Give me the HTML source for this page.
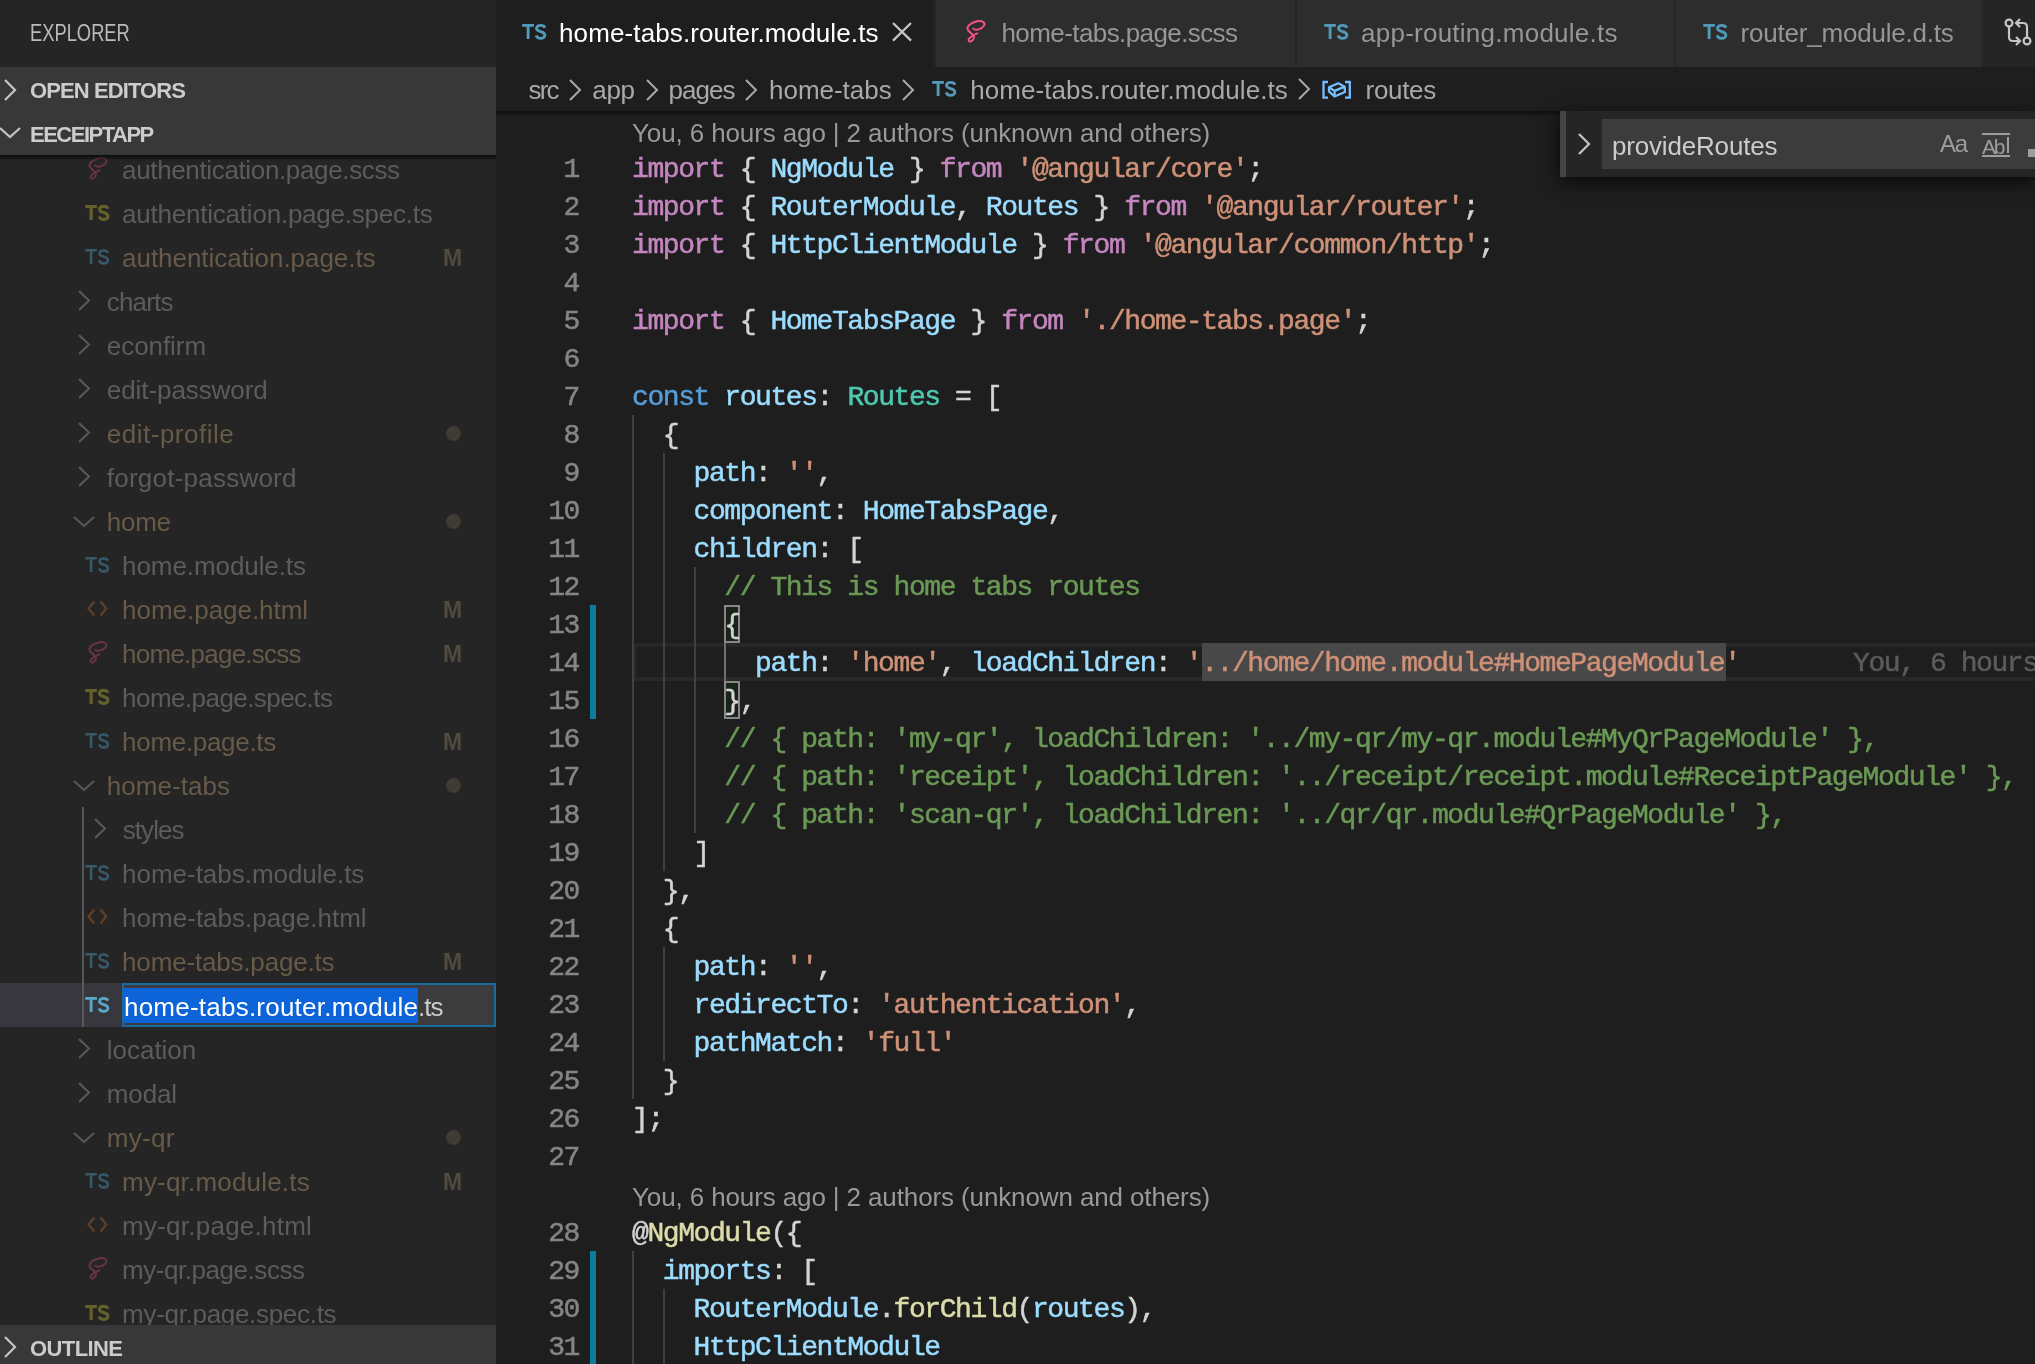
<!DOCTYPE html>
<html><head><meta charset="utf-8"><style>
html,body{margin:0;padding:0;width:2035px;height:1364px;overflow:hidden;background:#1e1e1e;font-family:'Liberation Sans', sans-serif}
#root{position:absolute;left:0;top:0;width:2035px;height:1364px;will-change:transform;overflow:hidden}
#root div, #root svg{position:absolute}
.c{-webkit-text-stroke:0.5px currentColor}
</style></head><body><div id="root"><div style="left:0px;top:0px;width:496px;height:1364px;background:#252526;"></div><div style="left:30px;top:11px;font-size:23.5px;line-height:44px;color:#bbbbbb;font-family:'Liberation Sans', sans-serif;white-space:pre;transform-origin:0 0;transform:scaleX(0.78);">EXPLORER</div><div style="left:0px;top:67px;width:496px;height:88px;background:#383838;"></div><svg style="left:3px;top:78px" width="16" height="24"><path d="M2 2 L12 12.0 L2 22" fill="none" stroke="#c5c5c5" stroke-width="2.2"/></svg><div style="left:30px;top:69px;font-size:22px;line-height:44px;color:#cccccc;font-weight:bold;font-family:'Liberation Sans', sans-serif;white-space:pre;letter-spacing:-0.9px;">OPEN EDITORS</div><svg style="left:-2px;top:126px" width="24" height="15"><path d="M2 2 L12.0 11 L22 2" fill="none" stroke="#c5c5c5" stroke-width="2.2"/></svg><div style="left:30px;top:113px;font-size:22px;line-height:44px;color:#cccccc;font-weight:bold;font-family:'Liberation Sans', sans-serif;white-space:pre;letter-spacing:-1.5px;">EECEIPTAPP</div><div style="left:0;top:155px;width:496px;height:1170px;overflow:hidden"><svg style="left:82px;top:-3px" width="32" height="32" viewBox="0 0 32 32"><path d="M13.2 13.6 C15.5 15.8 21.5 14.5 24 10.8 C25.8 7.5 22 5.2 17 6.3 C12 7.4 7 10.8 7.5 14 C8 16.5 12 18.5 13.8 20.5 C14.5 22.5 13.5 25.3 11 26.3 C8.7 27.2 7.8 25 9.2 23.5 C11 21.5 14.5 19 17.4 18.3" fill="none" stroke="#6a3348" stroke-width="1.9" stroke-linecap="round"/></svg><div style="left:122.1px;top:-7px;font-size:26px;line-height:44px;color:#5c5c5c;font-family:'Liberation Sans', sans-serif;white-space:pre;letter-spacing:-0.357px;">authentication.page.scss</div><svg style="left:78px;top:41px" width="34" height="32" viewBox="0 0 34 32"><g fill="#63612d"><rect x="7.2" y="9" width="11.7" height="3.1"/><rect x="11.50" y="9" width="3.20" height="15"/></g><path d="M30 12.8 C29.3 11 27.8 10.4 25.7 10.4 C23 10.4 21.5 11.8 21.5 13.5 C21.5 15.5 23.5 16 25.7 16.6 C28.3 17.3 29.9 18.2 29.9 20.2 C29.9 22 28.2 23.4 25.7 23.4 C23.3 23.4 21.7 22.3 21.2 20.4" fill="none" stroke="#63612d" stroke-width="3.1"/></svg><div style="left:122.1px;top:37px;font-size:26px;line-height:44px;color:#5c5c5c;font-family:'Liberation Sans', sans-serif;white-space:pre;letter-spacing:-0.223px;">authentication.page.spec.ts</div><svg style="left:78px;top:85px" width="34" height="32" viewBox="0 0 34 32"><g fill="#375969"><rect x="7.2" y="9" width="11.7" height="2.5"/><rect x="11.80" y="9" width="2.60" height="15"/></g><path d="M30 12.8 C29.3 11 27.8 10.4 25.7 10.4 C23 10.4 21.5 11.8 21.5 13.5 C21.5 15.5 23.5 16 25.7 16.6 C28.3 17.3 29.9 18.2 29.9 20.2 C29.9 22 28.2 23.4 25.7 23.4 C23.3 23.4 21.7 22.3 21.2 20.4" fill="none" stroke="#375969" stroke-width="2.5"/></svg><div style="left:122.1px;top:81px;font-size:26px;line-height:44px;color:#675a48;font-family:'Liberation Sans', sans-serif;white-space:pre;letter-spacing:-0.043px;">authentication.page.ts</div><div style="left:443px;top:81px;font-size:23px;line-height:44px;color:#524a3e;font-weight:bold;font-family:'Liberation Sans', sans-serif;white-space:pre;">M</div><svg style="left:77px;top:134px" width="16" height="23"><path d="M2 2 L12 11.5 L2 21" fill="none" stroke="#5a5a5a" stroke-width="2"/></svg><div style="left:106.8px;top:125px;font-size:26px;line-height:44px;color:#5c5c5c;font-family:'Liberation Sans', sans-serif;white-space:pre;letter-spacing:-0.840px;">charts</div><svg style="left:77px;top:178px" width="16" height="23"><path d="M2 2 L12 11.5 L2 21" fill="none" stroke="#5a5a5a" stroke-width="2"/></svg><div style="left:106.8px;top:169px;font-size:26px;line-height:44px;color:#5c5c5c;font-family:'Liberation Sans', sans-serif;white-space:pre;letter-spacing:-0.057px;">econfirm</div><svg style="left:77px;top:222px" width="16" height="23"><path d="M2 2 L12 11.5 L2 21" fill="none" stroke="#5a5a5a" stroke-width="2"/></svg><div style="left:106.8px;top:213px;font-size:26px;line-height:44px;color:#5c5c5c;font-family:'Liberation Sans', sans-serif;white-space:pre;letter-spacing:-0.075px;">edit-password</div><svg style="left:77px;top:266px" width="16" height="23"><path d="M2 2 L12 11.5 L2 21" fill="none" stroke="#5a5a5a" stroke-width="2"/></svg><div style="left:106.8px;top:257px;font-size:26px;line-height:44px;color:#675a48;font-family:'Liberation Sans', sans-serif;white-space:pre;letter-spacing:0.500px;">edit-profile</div><div style="left:446px;top:271px;width:15px;height:15px;border-radius:50%;background:#403b34"></div><svg style="left:77px;top:310px" width="16" height="23"><path d="M2 2 L12 11.5 L2 21" fill="none" stroke="#5a5a5a" stroke-width="2"/></svg><div style="left:106.8px;top:301px;font-size:26px;line-height:44px;color:#5c5c5c;font-family:'Liberation Sans', sans-serif;white-space:pre;letter-spacing:0.229px;">forgot-password</div><svg style="left:72px;top:360px" width="24" height="15"><path d="M2 2 L12.0 11 L22 2" fill="none" stroke="#5a5a5a" stroke-width="2"/></svg><div style="left:106.8px;top:345px;font-size:26px;line-height:44px;color:#675a48;font-family:'Liberation Sans', sans-serif;white-space:pre;letter-spacing:-0.267px;">home</div><div style="left:446px;top:359px;width:15px;height:15px;border-radius:50%;background:#403b34"></div><svg style="left:78px;top:393px" width="34" height="32" viewBox="0 0 34 32"><g fill="#375969"><rect x="7.2" y="9" width="11.7" height="2.5"/><rect x="11.80" y="9" width="2.60" height="15"/></g><path d="M30 12.8 C29.3 11 27.8 10.4 25.7 10.4 C23 10.4 21.5 11.8 21.5 13.5 C21.5 15.5 23.5 16 25.7 16.6 C28.3 17.3 29.9 18.2 29.9 20.2 C29.9 22 28.2 23.4 25.7 23.4 C23.3 23.4 21.7 22.3 21.2 20.4" fill="none" stroke="#375969" stroke-width="2.5"/></svg><div style="left:122.1px;top:389px;font-size:26px;line-height:44px;color:#5c5c5c;font-family:'Liberation Sans', sans-serif;white-space:pre;letter-spacing:-0.085px;">home.module.ts</div><svg style="left:80px;top:437px" width="34" height="32" viewBox="0 0 34 32"><path d="M14.2 9.4 L8.6 16.4 L14.2 23.4 M20.6 9.4 L26.2 16.4 L20.6 23.4" fill="none" stroke="#5f3f28" stroke-width="2.4"/></svg><div style="left:122.1px;top:433px;font-size:26px;line-height:44px;color:#675a48;font-family:'Liberation Sans', sans-serif;white-space:pre;letter-spacing:-0.031px;">home.page.html</div><div style="left:443px;top:433px;font-size:23px;line-height:44px;color:#524a3e;font-weight:bold;font-family:'Liberation Sans', sans-serif;white-space:pre;">M</div><svg style="left:82px;top:481px" width="32" height="32" viewBox="0 0 32 32"><path d="M13.2 13.6 C15.5 15.8 21.5 14.5 24 10.8 C25.8 7.5 22 5.2 17 6.3 C12 7.4 7 10.8 7.5 14 C8 16.5 12 18.5 13.8 20.5 C14.5 22.5 13.5 25.3 11 26.3 C8.7 27.2 7.8 25 9.2 23.5 C11 21.5 14.5 19 17.4 18.3" fill="none" stroke="#6a3348" stroke-width="1.9" stroke-linecap="round"/></svg><div style="left:122.1px;top:477px;font-size:26px;line-height:44px;color:#675a48;font-family:'Liberation Sans', sans-serif;white-space:pre;letter-spacing:-0.762px;">home.page.scss</div><div style="left:443px;top:477px;font-size:23px;line-height:44px;color:#524a3e;font-weight:bold;font-family:'Liberation Sans', sans-serif;white-space:pre;">M</div><svg style="left:78px;top:525px" width="34" height="32" viewBox="0 0 34 32"><g fill="#63612d"><rect x="7.2" y="9" width="11.7" height="3.1"/><rect x="11.50" y="9" width="3.20" height="15"/></g><path d="M30 12.8 C29.3 11 27.8 10.4 25.7 10.4 C23 10.4 21.5 11.8 21.5 13.5 C21.5 15.5 23.5 16 25.7 16.6 C28.3 17.3 29.9 18.2 29.9 20.2 C29.9 22 28.2 23.4 25.7 23.4 C23.3 23.4 21.7 22.3 21.2 20.4" fill="none" stroke="#63612d" stroke-width="3.1"/></svg><div style="left:122.1px;top:521px;font-size:26px;line-height:44px;color:#5c5c5c;font-family:'Liberation Sans', sans-serif;white-space:pre;letter-spacing:-0.556px;">home.page.spec.ts</div><svg style="left:78px;top:569px" width="34" height="32" viewBox="0 0 34 32"><g fill="#375969"><rect x="7.2" y="9" width="11.7" height="2.5"/><rect x="11.80" y="9" width="2.60" height="15"/></g><path d="M30 12.8 C29.3 11 27.8 10.4 25.7 10.4 C23 10.4 21.5 11.8 21.5 13.5 C21.5 15.5 23.5 16 25.7 16.6 C28.3 17.3 29.9 18.2 29.9 20.2 C29.9 22 28.2 23.4 25.7 23.4 C23.3 23.4 21.7 22.3 21.2 20.4" fill="none" stroke="#375969" stroke-width="2.5"/></svg><div style="left:122.1px;top:565px;font-size:26px;line-height:44px;color:#675a48;font-family:'Liberation Sans', sans-serif;white-space:pre;letter-spacing:-0.309px;">home.page.ts</div><div style="left:443px;top:565px;font-size:23px;line-height:44px;color:#524a3e;font-weight:bold;font-family:'Liberation Sans', sans-serif;white-space:pre;">M</div><svg style="left:72px;top:624px" width="24" height="15"><path d="M2 2 L12.0 11 L22 2" fill="none" stroke="#5a5a5a" stroke-width="2"/></svg><div style="left:106.8px;top:609px;font-size:26px;line-height:44px;color:#675a48;font-family:'Liberation Sans', sans-serif;white-space:pre;letter-spacing:0.037px;">home-tabs</div><div style="left:446px;top:623px;width:15px;height:15px;border-radius:50%;background:#403b34"></div><svg style="left:93px;top:662px" width="16" height="23"><path d="M2 2 L12 11.5 L2 21" fill="none" stroke="#5a5a5a" stroke-width="2"/></svg><div style="left:122.8px;top:653px;font-size:26px;line-height:44px;color:#5c5c5c;font-family:'Liberation Sans', sans-serif;white-space:pre;letter-spacing:-0.960px;">styles</div><svg style="left:78px;top:701px" width="34" height="32" viewBox="0 0 34 32"><g fill="#375969"><rect x="7.2" y="9" width="11.7" height="2.5"/><rect x="11.80" y="9" width="2.60" height="15"/></g><path d="M30 12.8 C29.3 11 27.8 10.4 25.7 10.4 C23 10.4 21.5 11.8 21.5 13.5 C21.5 15.5 23.5 16 25.7 16.6 C28.3 17.3 29.9 18.2 29.9 20.2 C29.9 22 28.2 23.4 25.7 23.4 C23.3 23.4 21.7 22.3 21.2 20.4" fill="none" stroke="#375969" stroke-width="2.5"/></svg><div style="left:122.1px;top:697px;font-size:26px;line-height:44px;color:#5c5c5c;font-family:'Liberation Sans', sans-serif;white-space:pre;letter-spacing:-0.028px;">home-tabs.module.ts</div><svg style="left:80px;top:745px" width="34" height="32" viewBox="0 0 34 32"><path d="M14.2 9.4 L8.6 16.4 L14.2 23.4 M20.6 9.4 L26.2 16.4 L20.6 23.4" fill="none" stroke="#5f3f28" stroke-width="2.4"/></svg><div style="left:122.1px;top:741px;font-size:26px;line-height:44px;color:#5c5c5c;font-family:'Liberation Sans', sans-serif;white-space:pre;letter-spacing:0.017px;">home-tabs.page.html</div><svg style="left:78px;top:789px" width="34" height="32" viewBox="0 0 34 32"><g fill="#375969"><rect x="7.2" y="9" width="11.7" height="2.5"/><rect x="11.80" y="9" width="2.60" height="15"/></g><path d="M30 12.8 C29.3 11 27.8 10.4 25.7 10.4 C23 10.4 21.5 11.8 21.5 13.5 C21.5 15.5 23.5 16 25.7 16.6 C28.3 17.3 29.9 18.2 29.9 20.2 C29.9 22 28.2 23.4 25.7 23.4 C23.3 23.4 21.7 22.3 21.2 20.4" fill="none" stroke="#375969" stroke-width="2.5"/></svg><div style="left:122.1px;top:785px;font-size:26px;line-height:44px;color:#675a48;font-family:'Liberation Sans', sans-serif;white-space:pre;letter-spacing:-0.181px;">home-tabs.page.ts</div><div style="left:443px;top:785px;font-size:23px;line-height:44px;color:#524a3e;font-weight:bold;font-family:'Liberation Sans', sans-serif;white-space:pre;">M</div><div style="left:0px;top:828px;width:496px;height:44px;background:#37373d;"></div><svg style="left:78px;top:833px" width="34" height="32" viewBox="0 0 34 32"><g fill="#5aa6c6"><rect x="7.2" y="9" width="11.7" height="2.8"/><rect x="11.65" y="9" width="2.90" height="15"/></g><path d="M30 12.8 C29.3 11 27.8 10.4 25.7 10.4 C23 10.4 21.5 11.8 21.5 13.5 C21.5 15.5 23.5 16 25.7 16.6 C28.3 17.3 29.9 18.2 29.9 20.2 C29.9 22 28.2 23.4 25.7 23.4 C23.3 23.4 21.7 22.3 21.2 20.4" fill="none" stroke="#5aa6c6" stroke-width="2.8"/></svg><div style="left:122px;top:828px;width:374px;height:44px;background:#3c3c3c;box-sizing:border-box;border:2px solid #1a6aa0;"></div><div style="left:124px;top:833px;width:294px;height:35px;background:#0d64d8;"></div><div style="left:124px;top:830px;font-size:26px;line-height:44px;color:#ffffff;font-family:'Liberation Sans', sans-serif;white-space:pre;letter-spacing:0.227px;">home-tabs.router.module</div><div style="left:418px;top:830px;font-size:26px;line-height:44px;color:#cccccc;font-family:'Liberation Sans', sans-serif;white-space:pre;letter-spacing:-1px;">.ts</div><svg style="left:77px;top:882px" width="16" height="23"><path d="M2 2 L12 11.5 L2 21" fill="none" stroke="#5a5a5a" stroke-width="2"/></svg><div style="left:106.8px;top:873px;font-size:26px;line-height:44px;color:#5c5c5c;font-family:'Liberation Sans', sans-serif;white-space:pre;letter-spacing:-0.029px;">location</div><svg style="left:77px;top:926px" width="16" height="23"><path d="M2 2 L12 11.5 L2 21" fill="none" stroke="#5a5a5a" stroke-width="2"/></svg><div style="left:106.8px;top:917px;font-size:26px;line-height:44px;color:#5c5c5c;font-family:'Liberation Sans', sans-serif;white-space:pre;letter-spacing:-0.125px;">modal</div><svg style="left:72px;top:976px" width="24" height="15"><path d="M2 2 L12.0 11 L22 2" fill="none" stroke="#5a5a5a" stroke-width="2"/></svg><div style="left:106.8px;top:961px;font-size:26px;line-height:44px;color:#675a48;font-family:'Liberation Sans', sans-serif;white-space:pre;letter-spacing:0.325px;">my-qr</div><div style="left:446px;top:975px;width:15px;height:15px;border-radius:50%;background:#403b34"></div><svg style="left:78px;top:1009px" width="34" height="32" viewBox="0 0 34 32"><g fill="#375969"><rect x="7.2" y="9" width="11.7" height="2.5"/><rect x="11.80" y="9" width="2.60" height="15"/></g><path d="M30 12.8 C29.3 11 27.8 10.4 25.7 10.4 C23 10.4 21.5 11.8 21.5 13.5 C21.5 15.5 23.5 16 25.7 16.6 C28.3 17.3 29.9 18.2 29.9 20.2 C29.9 22 28.2 23.4 25.7 23.4 C23.3 23.4 21.7 22.3 21.2 20.4" fill="none" stroke="#375969" stroke-width="2.5"/></svg><div style="left:122.1px;top:1005px;font-size:26px;line-height:44px;color:#675a48;font-family:'Liberation Sans', sans-serif;white-space:pre;letter-spacing:0.186px;">my-qr.module.ts</div><div style="left:443px;top:1005px;font-size:23px;line-height:44px;color:#524a3e;font-weight:bold;font-family:'Liberation Sans', sans-serif;white-space:pre;">M</div><svg style="left:80px;top:1053px" width="34" height="32" viewBox="0 0 34 32"><path d="M14.2 9.4 L8.6 16.4 L14.2 23.4 M20.6 9.4 L26.2 16.4 L20.6 23.4" fill="none" stroke="#5f3f28" stroke-width="2.4"/></svg><div style="left:122.1px;top:1049px;font-size:26px;line-height:44px;color:#5c5c5c;font-family:'Liberation Sans', sans-serif;white-space:pre;letter-spacing:0.236px;">my-qr.page.html</div><svg style="left:82px;top:1097px" width="32" height="32" viewBox="0 0 32 32"><path d="M13.2 13.6 C15.5 15.8 21.5 14.5 24 10.8 C25.8 7.5 22 5.2 17 6.3 C12 7.4 7 10.8 7.5 14 C8 16.5 12 18.5 13.8 20.5 C14.5 22.5 13.5 25.3 11 26.3 C8.7 27.2 7.8 25 9.2 23.5 C11 21.5 14.5 19 17.4 18.3" fill="none" stroke="#6a3348" stroke-width="1.9" stroke-linecap="round"/></svg><div style="left:122.1px;top:1093px;font-size:26px;line-height:44px;color:#5c5c5c;font-family:'Liberation Sans', sans-serif;white-space:pre;letter-spacing:-0.457px;">my-qr.page.scss</div><svg style="left:78px;top:1141px" width="34" height="32" viewBox="0 0 34 32"><g fill="#63612d"><rect x="7.2" y="9" width="11.7" height="3.1"/><rect x="11.50" y="9" width="3.20" height="15"/></g><path d="M30 12.8 C29.3 11 27.8 10.4 25.7 10.4 C23 10.4 21.5 11.8 21.5 13.5 C21.5 15.5 23.5 16 25.7 16.6 C28.3 17.3 29.9 18.2 29.9 20.2 C29.9 22 28.2 23.4 25.7 23.4 C23.3 23.4 21.7 22.3 21.2 20.4" fill="none" stroke="#63612d" stroke-width="3.1"/></svg><div style="left:122.1px;top:1137px;font-size:26px;line-height:44px;color:#5c5c5c;font-family:'Liberation Sans', sans-serif;white-space:pre;letter-spacing:-0.306px;">my-qr.page.spec.ts</div><div style="left:82px;top:652px;width:2px;height:220px;background:#585858;"></div></div><div style="left:0;top:155px;width:496px;height:6px;background:linear-gradient(#0c0c0c,rgba(0,0,0,0))"></div><div style="left:0px;top:1325px;width:496px;height:39px;background:#383838;"></div><svg style="left:3px;top:1335px" width="16" height="24"><path d="M2 2 L12 12.0 L2 22" fill="none" stroke="#c5c5c5" stroke-width="2.2"/></svg><div style="left:30px;top:1327px;font-size:22px;line-height:44px;color:#cccccc;font-weight:bold;font-family:'Liberation Sans', sans-serif;white-space:pre;letter-spacing:-0.6px;">OUTLINE</div><div style="left:496px;top:0px;width:1539px;height:1364px;background:#1e1e1e;"></div><div style="left:496px;top:0px;width:1539px;height:67px;background:#252526;"></div><div style="left:496px;top:0px;width:438px;height:67px;background:#1e1e1e;"></div><svg style="left:515px;top:15px" width="34" height="32" viewBox="0 0 34 32"><g fill="#519aba"><rect x="7.2" y="9" width="11.7" height="2.8"/><rect x="11.65" y="9" width="2.90" height="15"/></g><path d="M30 12.8 C29.3 11 27.8 10.4 25.7 10.4 C23 10.4 21.5 11.8 21.5 13.5 C21.5 15.5 23.5 16 25.7 16.6 C28.3 17.3 29.9 18.2 29.9 20.2 C29.9 22 28.2 23.4 25.7 23.4 C23.3 23.4 21.7 22.3 21.2 20.4" fill="none" stroke="#519aba" stroke-width="2.8"/></svg><div style="left:559px;top:11px;font-size:26px;line-height:44px;color:#ffffff;font-family:'Liberation Sans', sans-serif;white-space:pre;letter-spacing:0.120px;">home-tabs.router.module.ts</div><svg style="left:890px;top:20px" width="24" height="26"><path d="M3 3 L21 20.6 M21 3 L3 20.6" stroke="#c5c5c5" stroke-width="2.3"/></svg><div style="left:936px;top:0px;width:359px;height:67px;background:#2d2d2d;"></div><svg style="left:960px;top:15px" width="32" height="32" viewBox="0 0 32 32"><path d="M13.2 13.6 C15.5 15.8 21.5 14.5 24 10.8 C25.8 7.5 22 5.2 17 6.3 C12 7.4 7 10.8 7.5 14 C8 16.5 12 18.5 13.8 20.5 C14.5 22.5 13.5 25.3 11 26.3 C8.7 27.2 7.8 25 9.2 23.5 C11 21.5 14.5 19 17.4 18.3" fill="none" stroke="#f55385" stroke-width="1.9" stroke-linecap="round"/></svg><div style="left:1001.5px;top:11px;font-size:26px;line-height:44px;color:#969696;font-family:'Liberation Sans', sans-serif;white-space:pre;letter-spacing:-0.589px;">home-tabs.page.scss</div><div style="left:1297px;top:0px;width:377px;height:67px;background:#2d2d2d;"></div><svg style="left:1317px;top:15px" width="34" height="32" viewBox="0 0 34 32"><g fill="#519aba"><rect x="7.2" y="9" width="11.7" height="2.8"/><rect x="11.65" y="9" width="2.90" height="15"/></g><path d="M30 12.8 C29.3 11 27.8 10.4 25.7 10.4 C23 10.4 21.5 11.8 21.5 13.5 C21.5 15.5 23.5 16 25.7 16.6 C28.3 17.3 29.9 18.2 29.9 20.2 C29.9 22 28.2 23.4 25.7 23.4 C23.3 23.4 21.7 22.3 21.2 20.4" fill="none" stroke="#519aba" stroke-width="2.8"/></svg><div style="left:1361px;top:11px;font-size:26px;line-height:44px;color:#969696;font-family:'Liberation Sans', sans-serif;white-space:pre;letter-spacing:0.250px;">app-routing.module.ts</div><div style="left:1676px;top:0px;width:306px;height:67px;background:#2d2d2d;"></div><svg style="left:1696px;top:15px" width="34" height="32" viewBox="0 0 34 32"><g fill="#519aba"><rect x="7.2" y="9" width="11.7" height="2.8"/><rect x="11.65" y="9" width="2.90" height="15"/></g><path d="M30 12.8 C29.3 11 27.8 10.4 25.7 10.4 C23 10.4 21.5 11.8 21.5 13.5 C21.5 15.5 23.5 16 25.7 16.6 C28.3 17.3 29.9 18.2 29.9 20.2 C29.9 22 28.2 23.4 25.7 23.4 C23.3 23.4 21.7 22.3 21.2 20.4" fill="none" stroke="#519aba" stroke-width="2.8"/></svg><div style="left:1740.6px;top:11px;font-size:26px;line-height:44px;color:#969696;font-family:'Liberation Sans', sans-serif;white-space:pre;letter-spacing:-0.212px;">router_module.d.ts</div><svg style="left:2000px;top:14px" width="35" height="36" viewBox="0 0 35 36"><g fill="none" stroke="#c5c5c5" stroke-width="2.2"><circle cx="9" cy="9" r="3.4"/><circle cx="27" cy="27" r="3.4"/><path d="M9 12.5 V23 Q9 27 13 27 H20 M16 23 L20 27 L16 31"/><path d="M27 23.5 V13 Q27 9 23 9 H16 M20 5 L16 9 L20 13"/></g></svg><div style="left:528.6px;top:68px;font-size:26px;line-height:44px;color:#a9a9a9;font-family:'Liberation Sans', sans-serif;white-space:pre;letter-spacing:-1.900px;">src</div><div style="left:592.3px;top:68px;font-size:26px;line-height:44px;color:#a9a9a9;font-family:'Liberation Sans', sans-serif;white-space:pre;letter-spacing:-0.300px;">app</div><div style="left:668.5px;top:68px;font-size:26px;line-height:44px;color:#a9a9a9;font-family:'Liberation Sans', sans-serif;white-space:pre;letter-spacing:-0.975px;">pages</div><div style="left:769.1px;top:68px;font-size:26px;line-height:44px;color:#a9a9a9;font-family:'Liberation Sans', sans-serif;white-space:pre;letter-spacing:-0.038px;">home-tabs</div><svg style="left:568px;top:78px" width="16" height="24"><path d="M2 2 L12 12.0 L2 22" fill="none" stroke="#a9a9a9" stroke-width="2"/></svg><svg style="left:645px;top:78px" width="16" height="24"><path d="M2 2 L12 12.0 L2 22" fill="none" stroke="#a9a9a9" stroke-width="2"/></svg><svg style="left:744px;top:78px" width="16" height="24"><path d="M2 2 L12 12.0 L2 22" fill="none" stroke="#a9a9a9" stroke-width="2"/></svg><svg style="left:901px;top:78px" width="16" height="24"><path d="M2 2 L12 12.0 L2 22" fill="none" stroke="#a9a9a9" stroke-width="2"/></svg><svg style="left:1297px;top:77px" width="16" height="24"><path d="M2 2 L12 12.0 L2 22" fill="none" stroke="#a9a9a9" stroke-width="2"/></svg><svg style="left:925px;top:72px" width="34" height="32" viewBox="0 0 34 32"><g fill="#519aba"><rect x="7.2" y="9" width="11.7" height="2.8"/><rect x="11.65" y="9" width="2.90" height="15"/></g><path d="M30 12.8 C29.3 11 27.8 10.4 25.7 10.4 C23 10.4 21.5 11.8 21.5 13.5 C21.5 15.5 23.5 16 25.7 16.6 C28.3 17.3 29.9 18.2 29.9 20.2 C29.9 22 28.2 23.4 25.7 23.4 C23.3 23.4 21.7 22.3 21.2 20.4" fill="none" stroke="#519aba" stroke-width="2.8"/></svg><div style="left:970.3px;top:68px;font-size:26px;line-height:44px;color:#a9a9a9;font-family:'Liberation Sans', sans-serif;white-space:pre;letter-spacing:0.036px;">home-tabs.router.module.ts</div><svg style="left:1300px;top:70px" width="60" height="40" viewBox="0 0 60 40"><g fill="none" stroke="#75beff" stroke-width="2.3"><path d="M28 12 H23.5 V27.7 H28 M45 12 H49.8 V27.7 H45"/><path d="M29 17.3 L38.3 13.3 L44.6 16.6 L44.9 22.1 L34.6 26.5 L29 21.4 Z M29 17.3 L34.6 20.9 L44.6 16.6 M34.6 20.9 V26.5"/></g></svg><div style="left:1365.6px;top:68px;font-size:26px;line-height:44px;color:#a9a9a9;font-family:'Liberation Sans', sans-serif;white-space:pre;letter-spacing:-0.320px;">routes</div><div style="left:496px;top:111px;width:1539px;height:6px;background:linear-gradient(#0f0f0f,rgba(0,0,0,0))"></div><div style="left:632px;top:643px;width:1403px;height:38px;box-sizing:border-box;border:4px solid #282828;border-right:none"></div><div style="left:1202px;top:643px;width:524px;height:38px;background:#484848"></div><div style="left:724px;top:605px;width:16px;height:38px;box-sizing:border-box;border:2px solid #888888;background:#172417"></div><div style="left:724px;top:681px;width:16px;height:38px;box-sizing:border-box;border:2px solid #888888;background:#172417"></div><div style="left:632px;top:415px;width:2px;height:684px;background:#404040"></div><div style="left:663px;top:453px;width:2px;height:418px;background:#404040"></div><div style="left:663px;top:947px;width:2px;height:114px;background:#404040"></div><div style="left:694px;top:567px;width:2px;height:266px;background:#404040"></div><div style="left:632px;top:1251px;width:2px;height:114px;background:#404040"></div><div style="left:663px;top:1289px;width:2px;height:76px;background:#404040"></div><div style="left:724px;top:643px;width:2px;height:38px;background:#707070"></div><div style="left:590px;top:605px;width:6px;height:114px;background:#0c7d9d;"></div><div style="left:590px;top:1251px;width:6px;height:113px;background:#0c7d9d;"></div><div class="c" style="left:479px;top:151px;width:100px;text-align:right;font-size:28px;line-height:38px;color:#858585;font-family:'Liberation Mono', monospace;letter-spacing:-1.42px">1</div><div class="c" style="left:479px;top:189px;width:100px;text-align:right;font-size:28px;line-height:38px;color:#858585;font-family:'Liberation Mono', monospace;letter-spacing:-1.42px">2</div><div class="c" style="left:479px;top:227px;width:100px;text-align:right;font-size:28px;line-height:38px;color:#858585;font-family:'Liberation Mono', monospace;letter-spacing:-1.42px">3</div><div class="c" style="left:479px;top:265px;width:100px;text-align:right;font-size:28px;line-height:38px;color:#858585;font-family:'Liberation Mono', monospace;letter-spacing:-1.42px">4</div><div class="c" style="left:479px;top:303px;width:100px;text-align:right;font-size:28px;line-height:38px;color:#858585;font-family:'Liberation Mono', monospace;letter-spacing:-1.42px">5</div><div class="c" style="left:479px;top:341px;width:100px;text-align:right;font-size:28px;line-height:38px;color:#858585;font-family:'Liberation Mono', monospace;letter-spacing:-1.42px">6</div><div class="c" style="left:479px;top:379px;width:100px;text-align:right;font-size:28px;line-height:38px;color:#858585;font-family:'Liberation Mono', monospace;letter-spacing:-1.42px">7</div><div class="c" style="left:479px;top:417px;width:100px;text-align:right;font-size:28px;line-height:38px;color:#858585;font-family:'Liberation Mono', monospace;letter-spacing:-1.42px">8</div><div class="c" style="left:479px;top:455px;width:100px;text-align:right;font-size:28px;line-height:38px;color:#858585;font-family:'Liberation Mono', monospace;letter-spacing:-1.42px">9</div><div class="c" style="left:479px;top:493px;width:100px;text-align:right;font-size:28px;line-height:38px;color:#858585;font-family:'Liberation Mono', monospace;letter-spacing:-1.42px">10</div><div class="c" style="left:479px;top:531px;width:100px;text-align:right;font-size:28px;line-height:38px;color:#858585;font-family:'Liberation Mono', monospace;letter-spacing:-1.42px">11</div><div class="c" style="left:479px;top:569px;width:100px;text-align:right;font-size:28px;line-height:38px;color:#858585;font-family:'Liberation Mono', monospace;letter-spacing:-1.42px">12</div><div class="c" style="left:479px;top:607px;width:100px;text-align:right;font-size:28px;line-height:38px;color:#858585;font-family:'Liberation Mono', monospace;letter-spacing:-1.42px">13</div><div class="c" style="left:479px;top:645px;width:100px;text-align:right;font-size:28px;line-height:38px;color:#858585;font-family:'Liberation Mono', monospace;letter-spacing:-1.42px">14</div><div class="c" style="left:479px;top:683px;width:100px;text-align:right;font-size:28px;line-height:38px;color:#858585;font-family:'Liberation Mono', monospace;letter-spacing:-1.42px">15</div><div class="c" style="left:479px;top:721px;width:100px;text-align:right;font-size:28px;line-height:38px;color:#858585;font-family:'Liberation Mono', monospace;letter-spacing:-1.42px">16</div><div class="c" style="left:479px;top:759px;width:100px;text-align:right;font-size:28px;line-height:38px;color:#858585;font-family:'Liberation Mono', monospace;letter-spacing:-1.42px">17</div><div class="c" style="left:479px;top:797px;width:100px;text-align:right;font-size:28px;line-height:38px;color:#858585;font-family:'Liberation Mono', monospace;letter-spacing:-1.42px">18</div><div class="c" style="left:479px;top:835px;width:100px;text-align:right;font-size:28px;line-height:38px;color:#858585;font-family:'Liberation Mono', monospace;letter-spacing:-1.42px">19</div><div class="c" style="left:479px;top:873px;width:100px;text-align:right;font-size:28px;line-height:38px;color:#858585;font-family:'Liberation Mono', monospace;letter-spacing:-1.42px">20</div><div class="c" style="left:479px;top:911px;width:100px;text-align:right;font-size:28px;line-height:38px;color:#858585;font-family:'Liberation Mono', monospace;letter-spacing:-1.42px">21</div><div class="c" style="left:479px;top:949px;width:100px;text-align:right;font-size:28px;line-height:38px;color:#858585;font-family:'Liberation Mono', monospace;letter-spacing:-1.42px">22</div><div class="c" style="left:479px;top:987px;width:100px;text-align:right;font-size:28px;line-height:38px;color:#858585;font-family:'Liberation Mono', monospace;letter-spacing:-1.42px">23</div><div class="c" style="left:479px;top:1025px;width:100px;text-align:right;font-size:28px;line-height:38px;color:#858585;font-family:'Liberation Mono', monospace;letter-spacing:-1.42px">24</div><div class="c" style="left:479px;top:1063px;width:100px;text-align:right;font-size:28px;line-height:38px;color:#858585;font-family:'Liberation Mono', monospace;letter-spacing:-1.42px">25</div><div class="c" style="left:479px;top:1101px;width:100px;text-align:right;font-size:28px;line-height:38px;color:#858585;font-family:'Liberation Mono', monospace;letter-spacing:-1.42px">26</div><div class="c" style="left:479px;top:1139px;width:100px;text-align:right;font-size:28px;line-height:38px;color:#858585;font-family:'Liberation Mono', monospace;letter-spacing:-1.42px">27</div><div class="c" style="left:479px;top:1215px;width:100px;text-align:right;font-size:28px;line-height:38px;color:#858585;font-family:'Liberation Mono', monospace;letter-spacing:-1.42px">28</div><div class="c" style="left:479px;top:1253px;width:100px;text-align:right;font-size:28px;line-height:38px;color:#858585;font-family:'Liberation Mono', monospace;letter-spacing:-1.42px">29</div><div class="c" style="left:479px;top:1291px;width:100px;text-align:right;font-size:28px;line-height:38px;color:#858585;font-family:'Liberation Mono', monospace;letter-spacing:-1.42px">30</div><div class="c" style="left:479px;top:1329px;width:100px;text-align:right;font-size:28px;line-height:38px;color:#858585;font-family:'Liberation Mono', monospace;letter-spacing:-1.42px">31</div><div class="c" style="left:632px;top:151px;font-size:28px;line-height:38px;font-family:'Liberation Mono', monospace;letter-spacing:-1.42px;white-space:pre"><span style="color:#C586C0">import</span><span style="color:#D4D4D4"> { </span><span style="color:#9CDCFE">NgModule</span><span style="color:#D4D4D4"> } </span><span style="color:#C586C0">from</span><span style="color:#D4D4D4"> </span><span style="color:#CE9178">&#x27;@angular/core&#x27;</span><span style="color:#D4D4D4">;</span></div><div class="c" style="left:632px;top:189px;font-size:28px;line-height:38px;font-family:'Liberation Mono', monospace;letter-spacing:-1.42px;white-space:pre"><span style="color:#C586C0">import</span><span style="color:#D4D4D4"> { </span><span style="color:#9CDCFE">RouterModule</span><span style="color:#D4D4D4">, </span><span style="color:#9CDCFE">Routes</span><span style="color:#D4D4D4"> } </span><span style="color:#C586C0">from</span><span style="color:#D4D4D4"> </span><span style="color:#CE9178">&#x27;@angular/router&#x27;</span><span style="color:#D4D4D4">;</span></div><div class="c" style="left:632px;top:227px;font-size:28px;line-height:38px;font-family:'Liberation Mono', monospace;letter-spacing:-1.42px;white-space:pre"><span style="color:#C586C0">import</span><span style="color:#D4D4D4"> { </span><span style="color:#9CDCFE">HttpClientModule</span><span style="color:#D4D4D4"> } </span><span style="color:#C586C0">from</span><span style="color:#D4D4D4"> </span><span style="color:#CE9178">&#x27;@angular/common/http&#x27;</span><span style="color:#D4D4D4">;</span></div><div class="c" style="left:632px;top:303px;font-size:28px;line-height:38px;font-family:'Liberation Mono', monospace;letter-spacing:-1.42px;white-space:pre"><span style="color:#C586C0">import</span><span style="color:#D4D4D4"> { </span><span style="color:#9CDCFE">HomeTabsPage</span><span style="color:#D4D4D4"> } </span><span style="color:#C586C0">from</span><span style="color:#D4D4D4"> </span><span style="color:#CE9178">&#x27;./home-tabs.page&#x27;</span><span style="color:#D4D4D4">;</span></div><div class="c" style="left:632px;top:379px;font-size:28px;line-height:38px;font-family:'Liberation Mono', monospace;letter-spacing:-1.42px;white-space:pre"><span style="color:#569CD6">const</span><span style="color:#D4D4D4"> </span><span style="color:#9CDCFE">routes</span><span style="color:#D4D4D4">: </span><span style="color:#4EC9B0">Routes</span><span style="color:#D4D4D4"> = [</span></div><div class="c" style="left:632px;top:417px;font-size:28px;line-height:38px;font-family:'Liberation Mono', monospace;letter-spacing:-1.42px;white-space:pre"><span style="color:#D4D4D4">  {</span></div><div class="c" style="left:632px;top:455px;font-size:28px;line-height:38px;font-family:'Liberation Mono', monospace;letter-spacing:-1.42px;white-space:pre"><span style="color:#D4D4D4">    </span><span style="color:#9CDCFE">path</span><span style="color:#D4D4D4">: </span><span style="color:#CE9178">&#x27;&#x27;</span><span style="color:#D4D4D4">,</span></div><div class="c" style="left:632px;top:493px;font-size:28px;line-height:38px;font-family:'Liberation Mono', monospace;letter-spacing:-1.42px;white-space:pre"><span style="color:#D4D4D4">    </span><span style="color:#9CDCFE">component</span><span style="color:#D4D4D4">: </span><span style="color:#9CDCFE">HomeTabsPage</span><span style="color:#D4D4D4">,</span></div><div class="c" style="left:632px;top:531px;font-size:28px;line-height:38px;font-family:'Liberation Mono', monospace;letter-spacing:-1.42px;white-space:pre"><span style="color:#D4D4D4">    </span><span style="color:#9CDCFE">children</span><span style="color:#D4D4D4">: [</span></div><div class="c" style="left:632px;top:569px;font-size:28px;line-height:38px;font-family:'Liberation Mono', monospace;letter-spacing:-1.42px;white-space:pre"><span style="color:#D4D4D4">      </span><span style="color:#6A9955">// This is home tabs routes</span></div><div class="c" style="left:632px;top:607px;font-size:28px;line-height:38px;font-family:'Liberation Mono', monospace;letter-spacing:-1.42px;white-space:pre"><span style="color:#D4D4D4">      {</span></div><div class="c" style="left:632px;top:645px;font-size:28px;line-height:38px;font-family:'Liberation Mono', monospace;letter-spacing:-1.42px;white-space:pre"><span style="color:#D4D4D4">        </span><span style="color:#9CDCFE">path</span><span style="color:#D4D4D4">: </span><span style="color:#CE9178">&#x27;home&#x27;</span><span style="color:#D4D4D4">, </span><span style="color:#9CDCFE">loadChildren</span><span style="color:#D4D4D4">: </span><span style="color:#CE9178">&#x27;../home/home.module#HomePageModule&#x27;</span></div><div class="c" style="left:632px;top:683px;font-size:28px;line-height:38px;font-family:'Liberation Mono', monospace;letter-spacing:-1.42px;white-space:pre"><span style="color:#D4D4D4">      }</span><span style="color:#D4D4D4">,</span></div><div class="c" style="left:632px;top:721px;font-size:28px;line-height:38px;font-family:'Liberation Mono', monospace;letter-spacing:-1.42px;white-space:pre"><span style="color:#D4D4D4">      </span><span style="color:#6A9955">// { path: &#x27;my-qr&#x27;, loadChildren: &#x27;../my-qr/my-qr.module#MyQrPageModule&#x27; },</span></div><div class="c" style="left:632px;top:759px;font-size:28px;line-height:38px;font-family:'Liberation Mono', monospace;letter-spacing:-1.42px;white-space:pre"><span style="color:#D4D4D4">      </span><span style="color:#6A9955">// { path: &#x27;receipt&#x27;, loadChildren: &#x27;../receipt/receipt.module#ReceiptPageModule&#x27; },</span></div><div class="c" style="left:632px;top:797px;font-size:28px;line-height:38px;font-family:'Liberation Mono', monospace;letter-spacing:-1.42px;white-space:pre"><span style="color:#D4D4D4">      </span><span style="color:#6A9955">// { path: &#x27;scan-qr&#x27;, loadChildren: &#x27;../qr/qr.module#QrPageModule&#x27; },</span></div><div class="c" style="left:632px;top:835px;font-size:28px;line-height:38px;font-family:'Liberation Mono', monospace;letter-spacing:-1.42px;white-space:pre"><span style="color:#D4D4D4">    ]</span></div><div class="c" style="left:632px;top:873px;font-size:28px;line-height:38px;font-family:'Liberation Mono', monospace;letter-spacing:-1.42px;white-space:pre"><span style="color:#D4D4D4">  },</span></div><div class="c" style="left:632px;top:911px;font-size:28px;line-height:38px;font-family:'Liberation Mono', monospace;letter-spacing:-1.42px;white-space:pre"><span style="color:#D4D4D4">  {</span></div><div class="c" style="left:632px;top:949px;font-size:28px;line-height:38px;font-family:'Liberation Mono', monospace;letter-spacing:-1.42px;white-space:pre"><span style="color:#D4D4D4">    </span><span style="color:#9CDCFE">path</span><span style="color:#D4D4D4">: </span><span style="color:#CE9178">&#x27;&#x27;</span><span style="color:#D4D4D4">,</span></div><div class="c" style="left:632px;top:987px;font-size:28px;line-height:38px;font-family:'Liberation Mono', monospace;letter-spacing:-1.42px;white-space:pre"><span style="color:#D4D4D4">    </span><span style="color:#9CDCFE">redirectTo</span><span style="color:#D4D4D4">: </span><span style="color:#CE9178">&#x27;authentication&#x27;</span><span style="color:#D4D4D4">,</span></div><div class="c" style="left:632px;top:1025px;font-size:28px;line-height:38px;font-family:'Liberation Mono', monospace;letter-spacing:-1.42px;white-space:pre"><span style="color:#D4D4D4">    </span><span style="color:#9CDCFE">pathMatch</span><span style="color:#D4D4D4">: </span><span style="color:#CE9178">&#x27;full&#x27;</span></div><div class="c" style="left:632px;top:1063px;font-size:28px;line-height:38px;font-family:'Liberation Mono', monospace;letter-spacing:-1.42px;white-space:pre"><span style="color:#D4D4D4">  }</span></div><div class="c" style="left:632px;top:1101px;font-size:28px;line-height:38px;font-family:'Liberation Mono', monospace;letter-spacing:-1.42px;white-space:pre"><span style="color:#D4D4D4">];</span></div><div class="c" style="left:632px;top:1215px;font-size:28px;line-height:38px;font-family:'Liberation Mono', monospace;letter-spacing:-1.42px;white-space:pre"><span style="color:#D4D4D4">@</span><span style="color:#DCDCAA">NgModule</span><span style="color:#D4D4D4">({</span></div><div class="c" style="left:632px;top:1253px;font-size:28px;line-height:38px;font-family:'Liberation Mono', monospace;letter-spacing:-1.42px;white-space:pre"><span style="color:#D4D4D4">  </span><span style="color:#9CDCFE">imports</span><span style="color:#D4D4D4">: [</span></div><div class="c" style="left:632px;top:1291px;font-size:28px;line-height:38px;font-family:'Liberation Mono', monospace;letter-spacing:-1.42px;white-space:pre"><span style="color:#D4D4D4">    </span><span style="color:#9CDCFE">RouterModule</span><span style="color:#D4D4D4">.</span><span style="color:#DCDCAA">forChild</span><span style="color:#D4D4D4">(</span><span style="color:#9CDCFE">routes</span><span style="color:#D4D4D4">),</span></div><div class="c" style="left:632px;top:1329px;font-size:28px;line-height:38px;font-family:'Liberation Mono', monospace;letter-spacing:-1.42px;white-space:pre"><span style="color:#D4D4D4">    </span><span style="color:#9CDCFE">HttpClientModule</span></div><div style="left:632px;top:114px;font-size:26px;line-height:38px;color:#999999;font-family:'Liberation Sans', sans-serif;white-space:pre;letter-spacing:-0.12px;">You, 6 hours ago | 2 authors (unknown and others)</div><div style="left:632px;top:1178px;font-size:26px;line-height:38px;color:#999999;font-family:'Liberation Sans', sans-serif;white-space:pre;letter-spacing:-0.12px;">You, 6 hours ago | 2 authors (unknown and others)</div><div class="c" style="left:1853px;top:645px;font-size:28px;line-height:38px;font-family:'Liberation Mono', monospace;letter-spacing:-1.42px;white-space:pre;color:#5c5c5c">You, 6 hours ago</div><div style="left:1560px;top:111px;width:475px;height:66px;background:#252526;box-shadow:0 4px 18px rgba(0,0,0,0.8)"></div><div style="left:1560px;top:111px;width:6px;height:66px;background:#454545;"></div><svg style="left:1577px;top:132px" width="16" height="24"><path d="M2 2 L12 12.0 L2 22" fill="none" stroke="#c5c5c5" stroke-width="2.2"/></svg><div style="left:1602px;top:119px;width:433px;height:50px;background:#3c3c3c;"></div><div style="left:1612px;top:124px;font-size:26px;line-height:44px;color:#cccccc;font-family:'Liberation Sans', sans-serif;white-space:pre;letter-spacing:-0.18px;">provideRoutes</div><div style="left:1940px;top:122px;font-size:24px;line-height:44px;color:#9d9d9d;font-family:'Liberation Sans', sans-serif;white-space:pre;letter-spacing:-1.2px;">Aa</div><div style="left:1982px;top:133px;width:28px;height:2px;background:#9d9d9d;"></div><div style="left:1982px;top:155px;width:28px;height:2px;background:#9d9d9d;"></div><div style="left:1982px;top:125px;font-size:21px;line-height:44px;color:#9d9d9d;font-family:'Liberation Sans', sans-serif;white-space:pre;letter-spacing:-2.2px;">Ab</div><div style="left:2007px;top:137px;width:2px;height:16px;background:#9d9d9d;"></div><div style="left:2028px;top:149px;width:7px;height:8px;background:#9d9d9d;"></div></div></body></html>
